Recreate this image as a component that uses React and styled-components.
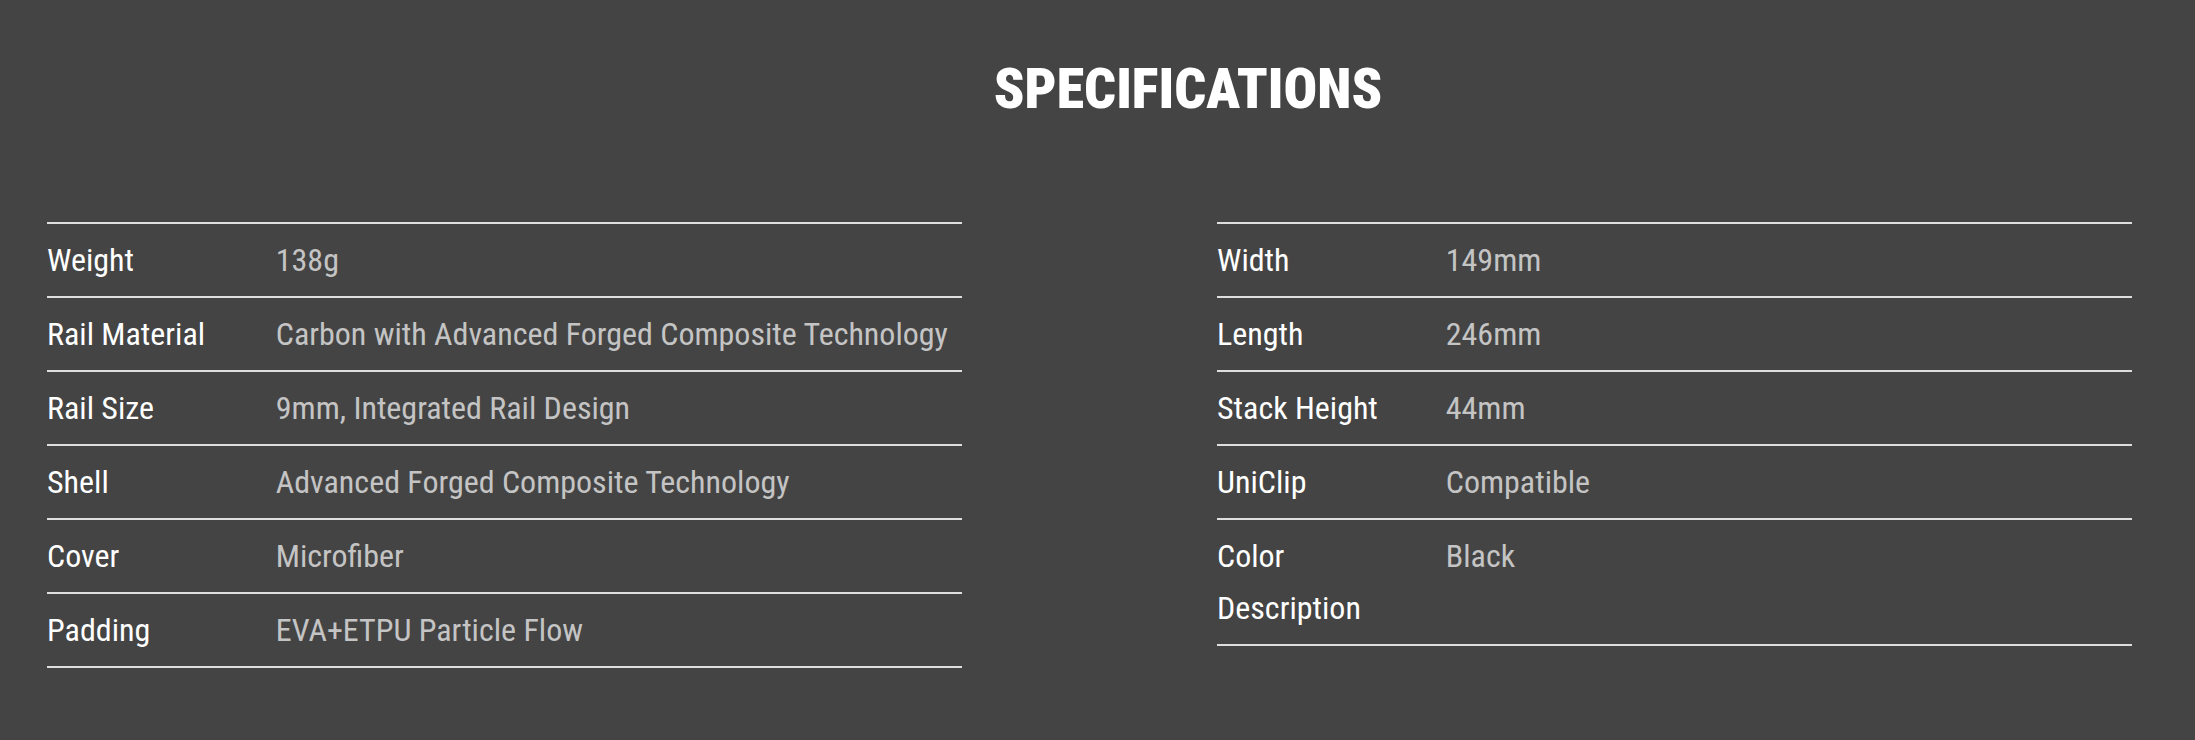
import styled, { createGlobalStyle } from "styled-components";

const leftSpecs = [
    { name: "Weight", value: "138g" },
    { name: "Rail Material", value: "Carbon with Advanced Forged Composite Technology" },
    { name: "Rail Size", value: "9mm, Integrated Rail Design" },
    { name: "Shell", value: "Advanced Forged Composite Technology" },
    { name: "Cover", value: "Microfiber" },
    { name: "Padding", value: "EVA+ETPU Particle Flow" },
];

const rightSpecs = [
    { name: "Width", value: "149mm" },
    { name: "Length", value: "246mm" },
    { name: "Stack Height", value: "44mm" },
    { name: "UniClip", value: "Compatible" },
    { name: "Color Description", value: "Black" },
];

const GlobalStyle = createGlobalStyle`
    html, body {
        margin: 0;
        padding: 0;
        background: #444444;
    }
    body {
        font-family: "Roboto Condensed", Roboto, "Liberation Sans", sans-serif;
        font-stretch: condensed;
    }
`;

const SpecTable = ({ specs }) => (
    <Column>
        {specs.map((spec) => (
            <Row key={spec.name}>
                <Label>{spec.name}</Label>
                <Value>{spec.value}</Value>
            </Row>
        ))}
    </Column>
);

const App = () => {
    return (
        <>
            <GlobalStyle />
            <Section>
                <Title>SPECIFICATIONS</Title>
                <Columns>
                    <SpecTable specs={leftSpecs} />
                    <SpecTable specs={rightSpecs} />
                </Columns>
            </Section>
        </>
    );
};

const Section = styled.section`
    min-height: 740px;
    box-sizing: border-box;
    padding: 54px 63px 0 47px;
    background: #444444;
`;

const Title = styled.h2`
    margin: 0 0 98px 0;
    padding-left: 197px;
    text-align: center;
    color: #ffffff;
    font-size: 56px;
    line-height: 70px;
    font-weight: 900;
`;

const Columns = styled.div`
    display: grid;
    grid-template-columns: 915px 915px;
    column-gap: 255px;
    align-items: start;
`;

const Column = styled.div`
    border-bottom: 2px solid #dedede;
`;

const Row = styled.div`
    display: grid;
    grid-template-columns: 25% 75%;
    border-top: 2px solid #dedede;
    padding: 10px 0;
    font-size: 32px;
    line-height: 52px;
`;

const Label = styled.div`
    color: #ffffff;
    padding-right: 20px;
`;

const Value = styled.div`
    color: #c4c4c4;
`;

export default App;
